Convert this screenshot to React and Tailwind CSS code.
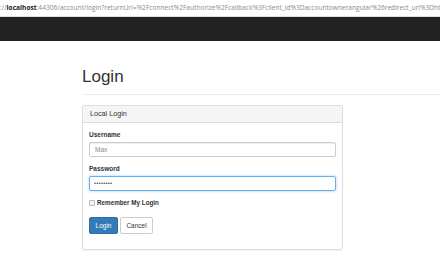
import React from "react";

const Field = ({ label, children }) => (
  <div className="mb-[7px]">
    <label className="block h-[9px] leading-[9px] font-bold text-[6.5px] text-[#333] mb-[3px]">{label}</label>
    {children}
  </div>
);

const App = () => {
  return (
    <div className="w-[440px] h-[264px] overflow-hidden bg-white font-['Liberation_Sans',Arial,sans-serif] text-[#333]">
      <div className="h-[17px] border-b border-[#e3e3e3] flex items-center whitespace-nowrap overflow-hidden text-[6.6px] text-[#8a8a8a] font-['Open_Sans',sans-serif]">
        <span>://</span>
        <span className="text-[#222] font-bold">localhost</span>
        <span>:44306/account/login?returnUrl=%2Fconnect%2Fauthorize%2Fcallback%3Fclient_id%3Daccountownerangular%26redirect_uri%3Dhttps%253</span>
      </div>
      <div className="h-[24px] bg-[#222]" />

      <div className="pl-[82px]">
        <div className="pt-[26px] pb-[8px] border-b border-[#eee]">
          <h1 className="text-[17px] leading-[19px] text-[#333]">Login</h1>
        </div>

        <div className="mt-[10px] w-[261px] border border-[#ddd] rounded-[2px] shadow-[0_1px_1px_rgba(0,0,0,0.05)]">
          <div className="h-[17px] bg-[#f5f5f5] border-b border-[#ddd] flex items-center px-[7px] text-[7.2px] text-[#333]">
            Local Login
          </div>
          <div className="pl-[6px] pr-[6px] pt-[7px] pb-[15px]">
            <Field label="Username">
              <div className="h-[15px] border border-[#ccc] rounded-[2px] shadow-[inset_0_1px_1px_rgba(0,0,0,0.075)] flex items-center px-[5px] text-[6.5px] text-[#888]">
                Max
              </div>
            </Field>
            <Field label="Password">
              <div className="h-[15px] border border-[#66afe9] rounded-[2px] shadow-[0_0_3px_rgba(102,175,233,0.6)] flex items-center px-[4px] text-[6px] tracking-[0.2px] text-[#555]">
                ••••••••
              </div>
            </Field>
            <div className="flex items-center gap-[2px] h-[10px] mt-[5px]">
              <span className="w-[6px] h-[6px] border border-[#bbb] rounded-[1px] bg-[#f3f3f3]" />
              <span className="font-bold text-[6.3px] text-[#333]">Remember My Login</span>
            </div>
            <div className="flex gap-[2px] mt-[9px]">
              <button className="w-[29px] h-[17px] bg-[#337ab7] border border-[#2e6da4] rounded-[2px] text-white text-[6.5px]">Login</button>
              <button className="w-[33px] h-[17px] bg-white border border-[#ccc] rounded-[2px] text-[#333] text-[6.5px]">Cancel</button>
            </div>
          </div>
        </div>
      </div>
    </div>
  );
};

export default App;
